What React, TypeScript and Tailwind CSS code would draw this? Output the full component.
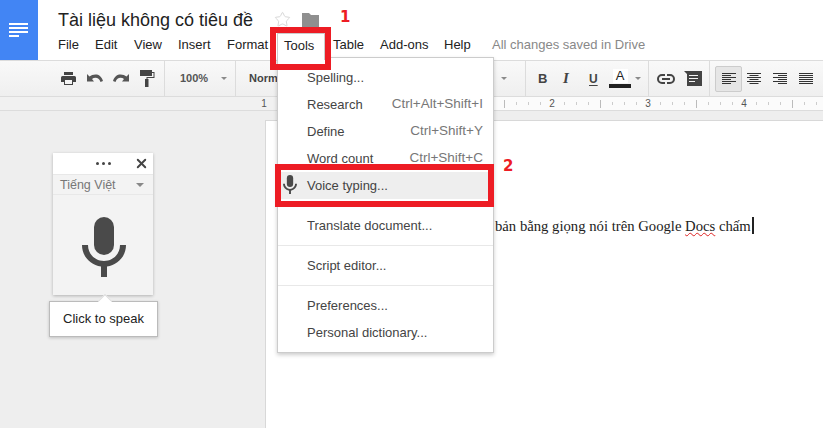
import { Star, X } from "lucide-react";

const menus = [
  { label: "File", w: "w-[37px]" },
  { label: "Edit", w: "w-[39px]" },
  { label: "View", w: "w-[44px]" },
  { label: "Insert", w: "w-[49px]" },
  { label: "Format", w: "w-[57px]" },
];

function Caret({ className = "" }: { className?: string }) {
  return <span className={`h-0 w-0 border-x-[3px] border-t-[3px] border-x-transparent border-t-[#8a8a8a] ${className}`} />;
}

function Divider() {
  return <div className="w-px self-stretch bg-[#dcdcdc]" />;
}

function MicIcon({ className = "" }: { className?: string }) {
  return (
    <svg className={className} viewBox="0 0 44 60" fill="#4a4a4a">
      <rect x="12" y="0" width="20" height="38" rx="10" />
      <path d="M0 28h6c0 9 7 16 16 16s16-7 16-16h6c0 11-8 20-19 21.500V60h-6V49.500C8 48 0 39 0 28z" />
    </svg>
  );
}

function MenuItem({ label, shortcut }: { label: string; shortcut?: string }) {
  return (
    <div className="flex h-[27px] items-center justify-between pr-[10px] pl-[29px] text-[13px] text-[#444]">
      <span>{label}</span>
      {shortcut && <span className="text-[13.500px] text-[#777]">{shortcut}</span>}
    </div>
  );
}

function MenuSep() {
  return <div className="my-[6px] h-px bg-[#e8e8e8]" />;
}

function AlignIcon({ type }: { type: "left" | "center" | "right" | "justify" }) {
  const lines = [0, 1, 2, 3, 4, 5];
  return (
    <svg width="14" height="12" viewBox="0 0 14 12" fill="#333">
      {lines.map((i) => {
        const short = i % 2 === 1 && type !== "justify";
        const w = short ? 9 : 14;
        const x = !short ? 0 : type === "left" ? 0 : type === "center" ? 2.5 : 5;
        return <rect key={i} x={x} y={i * 2} width={w} height="1" />;
      })}
    </svg>
  );
}

function RulerTicks({ n, bare }: { n: string; bare?: boolean }) {
  const slot = "flex w-[12px] shrink-0 justify-center";
  const small = bare ? null : <span className="h-[3px] w-px bg-[#ccc]" />;
  return (
    <div className="flex w-[96px] shrink-0 items-center">
      <div className={slot}>{!bare && <span className="h-[8px] w-px bg-[#bbb]" />}</div>
      <div className={slot}>{small}</div>
      <div className={slot}>{small}</div>
      <div className={slot}>{small}</div>
      <div className={`${slot} text-[10px] leading-none text-[#555]`}>{n}</div>
      <div className={slot}>{small}</div>
      <div className={slot}>{small}</div>
      <div className={slot}>{small}</div>
    </div>
  );
}

export default function App() {
  return (
    <div className="relative h-[428px] w-[823px] overflow-hidden bg-[#eeeeee] font-['Liberation_Sans',Arial,sans-serif]">
      {/* header */}
      <div className="flex h-[60px] bg-white">
        <div className="flex w-[38px] items-center justify-center bg-[#4285f4]">
          <svg width="20" height="14" viewBox="0 0 20 14" fill="#fff">
            <rect x="0" y="0" width="19" height="2" />
            <rect x="0" y="4" width="19" height="2" />
            <rect x="0" y="8" width="19" height="2" />
            <rect x="0" y="12" width="10" height="2" />
          </svg>
        </div>
        <div className="pl-[20px]">
          <div className="flex h-[33px] items-end">
            <span className="pb-[1px] text-[18px] leading-[24px] text-[#222]">Tài liệu không có tiêu đề</span>
            <Star className="mb-[5px] ml-[21px] h-[17px] w-[17px] text-[#d0d0d0]" strokeWidth={1.2} />
            <svg className="mb-[5px] ml-[11px]" width="17" height="15" viewBox="0 0 17 15" fill="#8f8f8f">
              <path d="M0 0h7l2 2h8v13H0z" />
            </svg>
          </div>
          <div className="flex h-[23px] items-center text-[13px] text-[#222]">
            {menus.map((m) => (
              <span key={m.label} className={m.w}>{m.label}</span>
            ))}
            <span className="relative z-10 mr-[8px] -ml-[7px] h-[27px] w-[48px] self-start border-x border-t border-[#ccc] bg-white pl-[6px] leading-[23px]">Tools</span>
            <span className="w-[47px]">Table</span>
            <span className="w-[64px]">Add-ons</span>
            <span className="w-[48px]">Help</span>
            <span className="text-[#888]">All changes saved in Drive</span>
          </div>
        </div>
      </div>

      {/* toolbar */}
      <div className="flex h-[37px] items-center border-y border-[#dcdcdc] bg-gradient-to-b from-[#f9f9f9] to-[#efefef] pl-[61px]">
        <div className="flex w-[103px] items-center">
          <svg width="15" height="13" viewBox="0 0 15 13" fill="#444">
            <path d="M3 0h9v3H3zM1.500 4h12A1.500 1.500 0 0 1 15 5.500V10h-3v3H3v-3H0V5.500A1.500 1.500 0 0 1 1.500 4z" />
            <rect x="4" y="8" width="7" height="4" fill="#f5f5f5" />
          </svg>
          <svg className="ml-[11px]" width="16" height="9" viewBox="0 0 16 9" fill="#555">
            <path d="M0 0l2.500 2.500C4.200 1.200 6 .5 8.500.5c3.300 0 6 1.800 7.500 6.500l-2.500 1C12.500 5 10.700 3.800 8.500 3.800c-1.300 0-2.500.4-3.500 1.200L7 7.500H0z" />
          </svg>
          <svg className="ml-[10px]" width="16" height="9" viewBox="0 0 16 9" fill="#555">
            <path d="M16 0l-2.500 2.500C11.800 1.200 10 .5 7.500.5 4.200.5 1.500 2.300 0 7l2.500 1C3.500 5 5.300 3.800 7.500 3.800c1.300 0 2.500.4 3.500 1.200L9 7.500h7z" />
          </svg>
          <svg className="ml-[11px]" width="15" height="17" viewBox="0 0 15 17" fill="#444">
            <rect x="0" y="0" width="12" height="6" />
            <path d="M12 2h2.500v6H7.500v2H6.500V7h7V3H12z" />
            <rect x="5" y="9" width="3.500" height="8" />
          </svg>
        </div>
        <Divider />
        <div className="flex w-[70px] items-center pl-[15px] text-[11px] font-bold text-[#555]">
          100%
          <Caret className="ml-[13px]" />
        </div>
        <Divider />
        <div className="w-[289px] pl-[13px]">
          <div className="flex items-center text-[11px] font-bold text-[#444]">
            <span>Normal</span>
            <Caret className="ml-[214px]" />
          </div>
        </div>
        <Divider />
        <div className="flex w-[122px] items-center pl-[12px] text-[#444]">
          <span className="w-[25px] text-[13px] font-bold">B</span>
          <span className="w-[26px] font-['Liberation_Serif',serif] text-[15px] leading-none font-bold italic">I</span>
          <span className="w-[20px] text-[12px] font-bold underline underline-offset-2">U</span>
          <span className="flex w-[22px] flex-col items-center">
            <span className="w-[15px] bg-white text-center text-[13px] leading-[14px] text-[#222]">A</span>
            <span className="mt-[1px] h-[4px] w-[22px] bg-[#222]" />
          </span>
          <Caret className="ml-[4px]" />
        </div>
        <Divider />
        <div className="flex w-[60px] items-center pl-[8px]">
          <svg width="18" height="10" viewBox="0 0 18 10" fill="none" stroke="#444" strokeWidth="2">
            <path d="M8 1H5a4 4 0 0 0 0 8h3" />
            <path d="M10 1h3a4 4 0 0 1 0 8h-3" />
            <path d="M5 5h8" />
          </svg>
          <svg className="ml-[9px]" width="18" height="15" viewBox="0 0 18 15" fill="#444">
            <path d="M0 0h18v15H3V3z" />
            <rect x="5" y="4" width="9" height="1" fill="#f5f5f5" />
            <rect x="5" y="7" width="9" height="1" fill="#f5f5f5" />
            <rect x="5" y="10" width="6" height="1" fill="#f5f5f5" />
          </svg>
        </div>
        <Divider />
        <div className="ml-[5px] flex h-[26px] w-[27px] items-center justify-center rounded-[2px] border border-[#ccc] bg-[#e6e6e6]">
          <AlignIcon type="left" />
        </div>
        <div className="ml-[4px] flex w-[16px] justify-center"><AlignIcon type="center" /></div>
        <div className="ml-[10px] flex w-[16px] justify-center"><AlignIcon type="right" /></div>
        <div className="ml-[10px] flex w-[16px] justify-center"><AlignIcon type="justify" /></div>
      </div>

      {/* ruler */}
      <div className="flex h-[14px] items-center overflow-hidden border-b border-[#dcdcdc] bg-[linear-gradient(to_right,#f1f1f1_300px,#fbfbfb_300px)] pl-[210px]">
        <RulerTicks n="1" bare />
        <RulerTicks n="" />
        <RulerTicks n="" />
        <RulerTicks n="2" />
        <RulerTicks n="3" />
        <RulerTicks n="4" />
        <RulerTicks n="" />
      </div>

      {/* page */}
      <div className="mt-[9px] ml-[265px] h-[308px] border-t border-l border-[#d8d8d8] bg-white">
        <div className="pt-[93px] pl-[229px] font-['Liberation_Serif',serif] text-[14.700px] leading-[20px] text-[#222]">
          <span>bản bằng giọng nói trên Google </span>
          <span className="underline decoration-[#d22] decoration-wavy decoration-1">Docs</span>
          <span> chấm</span>
          <span className="ml-px inline-block h-[17px] w-[2px] translate-y-[3px] bg-[#222]" />
        </div>
      </div>

      {/* voice widget */}
      <div className="absolute top-[153px] left-[53px] w-[100px] shadow-[0_1px_3px_rgba(0,0,0,0.25)]">
        <div className="relative flex h-[21px] items-center justify-center gap-[3px] bg-white">
          <span className="h-[3px] w-[3px] rounded-full bg-[#444]" />
          <span className="h-[3px] w-[3px] rounded-full bg-[#444]" />
          <span className="h-[3px] w-[3px] rounded-full bg-[#444]" />
          <X className="absolute top-[3px] right-[4px] h-[15px] w-[15px] text-[#444]" strokeWidth={3} />
        </div>
        <div className="flex h-[21px] items-center justify-between border-y border-[#e8e8e8] bg-[#f3f3f3] pr-[9px] pl-[7px] text-[12.500px] text-[#777]">
          <span className="translate-y-[1px]">Tiếng Việt</span>
          <span className="h-0 w-0 border-x-[4px] border-t-[4px] border-x-transparent border-t-[#888]" />
        </div>
        <div className="flex h-[100px] items-start justify-center bg-[#f3f3f3] pt-[22px] pl-[1px]">
          <MicIcon className="h-[60px] w-[44px]" />
        </div>
      </div>

      {/* click to speak tooltip */}
      <div className="absolute top-[301px] left-[49px] flex h-[36px] w-[109px] items-center justify-center border border-[#bbb] bg-white text-[13px] text-[#222] shadow-[0_1px_3px_rgba(0,0,0,0.2)]">
        Click to speak
        <span className="absolute -top-[6px] left-[50px] h-[10px] w-[10px] rotate-45 border-t border-l border-[#ddd] bg-white" />
      </div>

      {/* tools menu */}
      <div className="absolute top-[57px] left-[277px] h-[296px] w-[217px] border border-[#ccc] bg-white pt-[6px] pb-[6px] shadow-[0_2px_4px_rgba(0,0,0,0.2)]">
        <MenuItem label="Spelling..." />
        <MenuItem label="Research" shortcut="Ctrl+Alt+Shift+I" />
        <MenuItem label="Define" shortcut="Ctrl+Shift+Y" />
        <MenuItem label="Word count" shortcut="Ctrl+Shift+C" />
        <div className="relative bg-[#eeeeee]">
          <MenuItem label="Voice typing..." />
          <MicIcon className="absolute top-[3px] left-[5px] h-[19px] w-[14px]" />
        </div>
        <MenuSep />
        <MenuItem label="Translate document..." />
        <MenuSep />
        <MenuItem label="Script editor..." />
        <MenuSep />
        <MenuItem label="Preferences..." />
        <MenuItem label="Personal dictionary..." />
      </div>

      {/* red annotations */}
      <div className="absolute top-[27px] left-[270px] z-20 h-[43px] w-[61px] border-[6px] border-[#ed1c24]" />
      <div className="absolute top-[164px] left-[275px] z-20 h-[43px] w-[219px] border-[6px] border-[#ed1c24]" />
      <span className="absolute top-[6px] left-[340px] z-20 font-['DejaVu_Sans',sans-serif] text-[15px] font-bold text-[#ed1c24]">1</span>
      <span className="absolute top-[155px] left-[503px] z-20 font-['DejaVu_Sans',sans-serif] text-[15px] font-bold text-[#ed1c24]">2</span>
    </div>
  );
}
